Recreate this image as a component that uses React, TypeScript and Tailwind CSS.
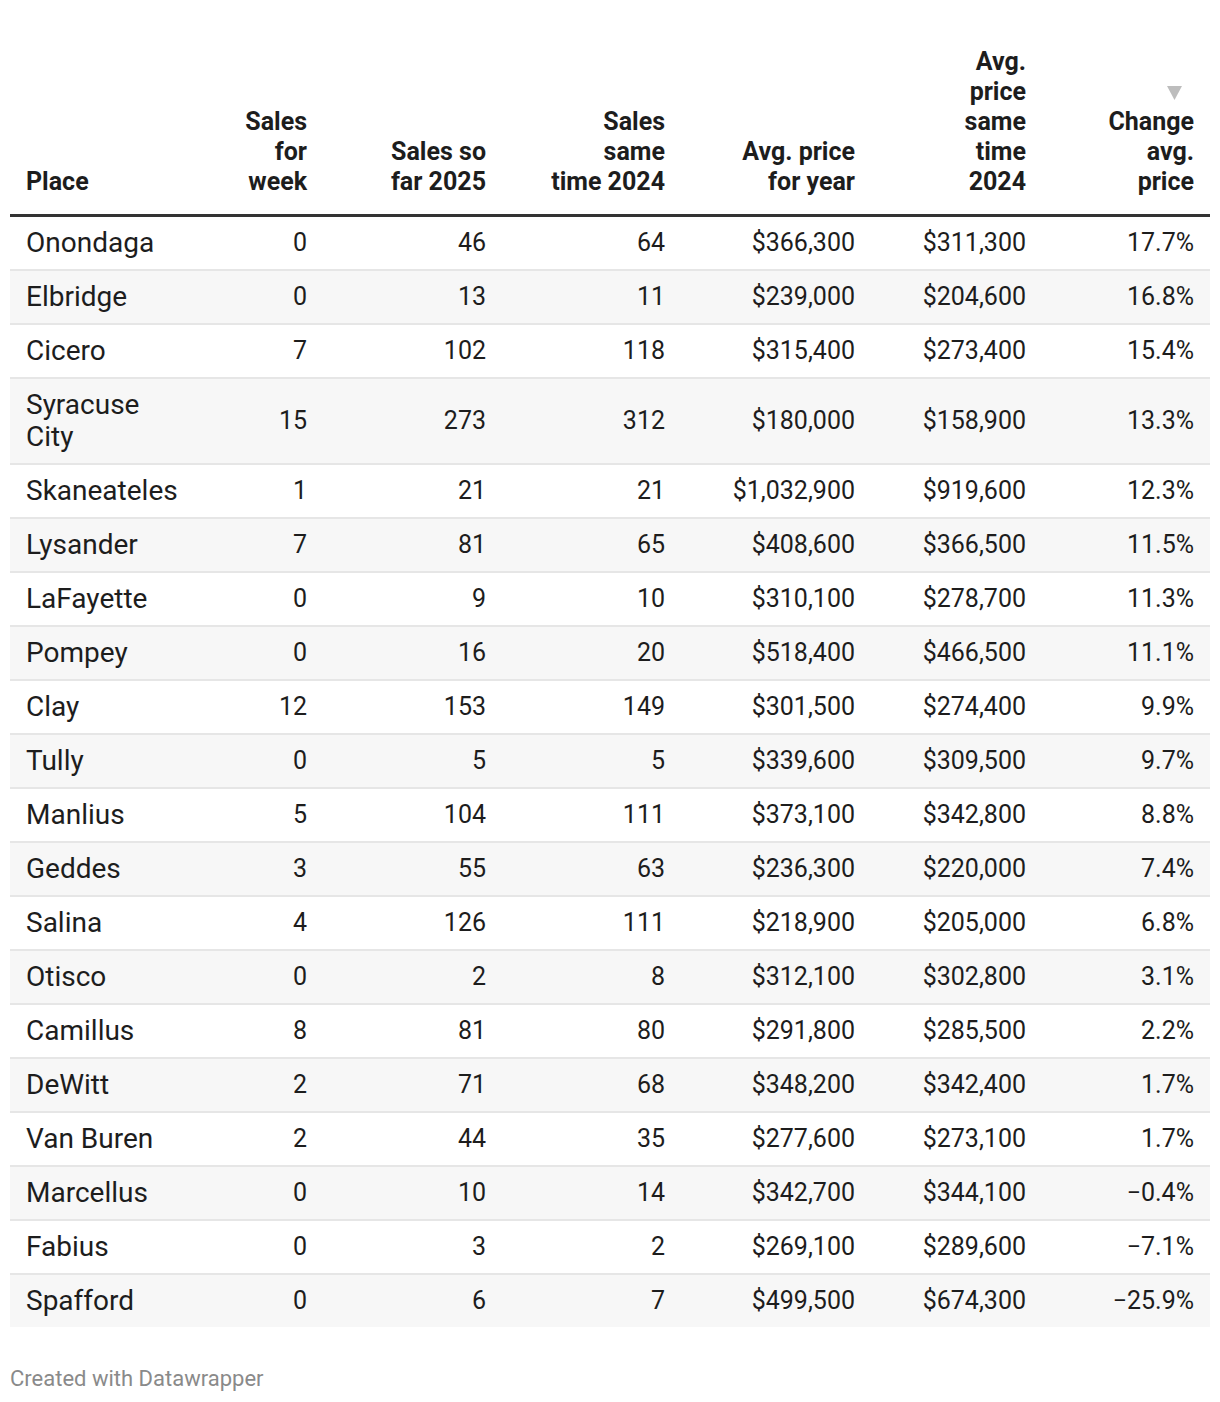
const ROWS: [string, string, string, string, string, string, string][] = [
  ['Onondaga', '0', '46', '64', '$366,300', '$311,300', '17.7%'],
  ['Elbridge', '0', '13', '11', '$239,000', '$204,600', '16.8%'],
  ['Cicero', '7', '102', '118', '$315,400', '$273,400', '15.4%'],
  ['Syracuse City', '15', '273', '312', '$180,000', '$158,900', '13.3%'],
  ['Skaneateles', '1', '21', '21', '$1,032,900', '$919,600', '12.3%'],
  ['Lysander', '7', '81', '65', '$408,600', '$366,500', '11.5%'],
  ['LaFayette', '0', '9', '10', '$310,100', '$278,700', '11.3%'],
  ['Pompey', '0', '16', '20', '$518,400', '$466,500', '11.1%'],
  ['Clay', '12', '153', '149', '$301,500', '$274,400', '9.9%'],
  ['Tully', '0', '5', '5', '$339,600', '$309,500', '9.7%'],
  ['Manlius', '5', '104', '111', '$373,100', '$342,800', '8.8%'],
  ['Geddes', '3', '55', '63', '$236,300', '$220,000', '7.4%'],
  ['Salina', '4', '126', '111', '$218,900', '$205,000', '6.8%'],
  ['Otisco', '0', '2', '8', '$312,100', '$302,800', '3.1%'],
  ['Camillus', '8', '81', '80', '$291,800', '$285,500', '2.2%'],
  ['DeWitt', '2', '71', '68', '$348,200', '$342,400', '1.7%'],
  ['Van Buren', '2', '44', '35', '$277,600', '$273,100', '1.7%'],
  ['Marcellus', '0', '10', '14', '$342,700', '$344,100', '−0.4%'],
  ['Fabius', '0', '3', '2', '$269,100', '$289,600', '−7.1%'],
  ['Spafford', '0', '6', '7', '$499,500', '$674,300', '−25.9%'],
];

const HEADERS: string[][] = [
  ['Place'],
  ['Sales', 'for', 'week'],
  ['Sales so', 'far 2025'],
  ['Sales', 'same', 'time 2024'],
  ['Avg. price', 'for year'],
  ['Avg.', 'price', 'same', 'time', '2024'],
  ['Change', 'avg.', 'price'],
];

const GRID = 'grid grid-cols-[195px_118px_179px_179px_190px_171px_168px]';

function SortArrow() {
  return (
    <svg width="15" height="14" viewBox="0 0 15 14" className="mb-[7px] mr-[12px]">
      <path d="M0 0 L15 0 L7.5 14 Z" fill="#bdbdbd" />
    </svg>
  );
}

export default function App() {
  return (
    <div className="bg-white min-h-[1402px] px-[10px] pt-[47px] font-['Roboto',sans-serif]">
      {/* Header */}
      <div className={`${GRID} border-b-[3px] border-[#333333]`}>
        {HEADERS.map((lines, i) => (
          <div
            key={i}
            className={`flex flex-col justify-end pb-[17px] text-[25px] leading-[30px] font-bold text-[#1d1d1d] ${
              i === 0 ? 'items-start pl-4' : 'items-end text-right pr-4'
            }`}
          >
            {i === 6 && <SortArrow />}
            {lines.map((l) => (
              <div key={l} className="whitespace-nowrap">{l}</div>
            ))}
          </div>
        ))}
      </div>

      {/* Body */}
      {ROWS.map((r, ri) => (
        <div
          key={r[0]}
          className={`${GRID} text-[25px] leading-[32px] text-[#1d1d1d] ${
            ri % 2 === 1 ? 'bg-[#f7f7f7]' : 'bg-white'
          } ${ri < ROWS.length - 1 ? 'border-b-2 border-[#e6e6e6]' : ''}`}
        >
          <div className="pl-4 pr-4 py-[10px] text-[28px]">
            {r[0] === 'Syracuse City' ? (
              <>
                Syracuse
                <br />
                City
              </>
            ) : (
              r[0]
            )}
          </div>
          {r.slice(1).map((v, ci) => (
            <div key={ci} className="pr-4 py-[10px] text-right flex items-center justify-end">
              {v}
            </div>
          ))}
        </div>
      ))}

      <div className="mt-[38px] text-[22px] leading-[28px] text-[#8a8a8a]">Created with Datawrapper</div>
    </div>
  );
}
